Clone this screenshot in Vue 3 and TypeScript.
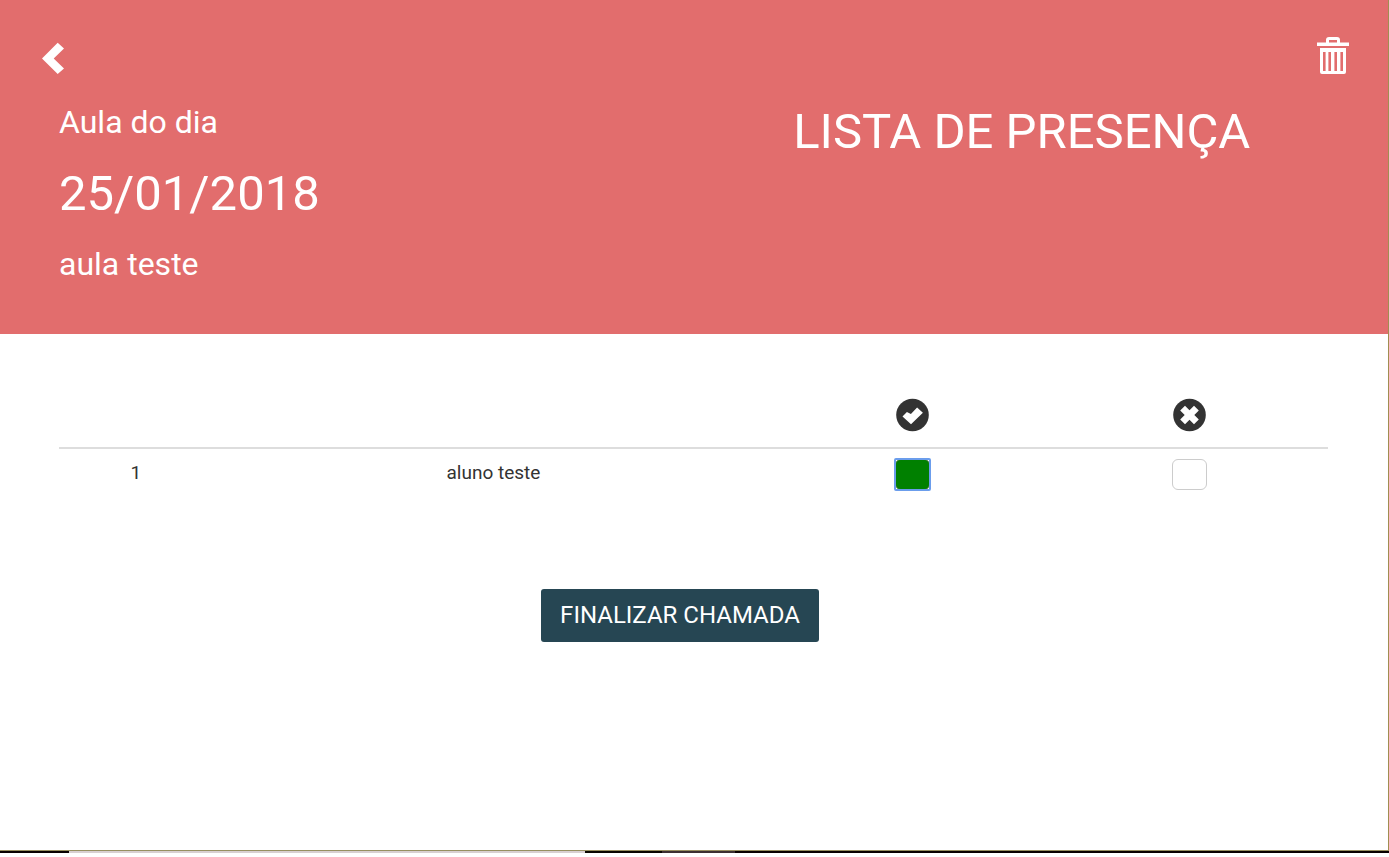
<script setup lang="ts">
import { ref } from 'vue'

type Presence = 'present' | 'absent' | null
interface Student {
  id: number
  name: string
  presence: Presence
}

const lesson = { date: '25/01/2018', title: 'aula teste' }
const students = ref<Student[]>([{ id: 1, name: 'aluno teste', presence: 'present' }])

function mark(student: Student, presence: Presence) {
  student.presence = presence
}
</script>

<template>
  <div class="page">
    <header class="banner">
      <div class="toolbar">
        <button type="button" class="icon-button" aria-label="Voltar">
          <svg width="22" height="32" viewBox="0 0 22 32" aria-hidden="true">
            <path d="M0 16.5 15.7.8 22 6.5 11.7 16.5 22 26.5l-6.3 5.5z" fill="currentColor" />
          </svg>
        </button>
        <button type="button" class="icon-button" aria-label="Excluir aula">
          <svg width="32" height="38" viewBox="0 0 32 38" aria-hidden="true">
            <path
              fill="currentColor"
              fill-rule="evenodd"
              d="M0 5.500h9V3q0-3 3-3h8q3 0 3 3v2.500h9v3.500H0zM12 3v2.500h8V3zM3 11h26v24q0 2-2 2H5q-2 0-2-2zM6 15v19h2.600V15zM11.400 15v19h2.600V15zM17.400 15v19h2.600V15zM23.400 15v19h2.600V15z"
            />
          </svg>
        </button>
      </div>
      <div class="heading">
        <div class="lesson">
          <p class="label">Aula do dia</p>
          <p class="date">{{ lesson.date }}</p>
          <p class="label">{{ lesson.title }}</p>
        </div>
        <h1>LISTA DE PRESENÇA</h1>
      </div>
    </header>

    <main>
      <table>
        <colgroup>
          <col class="col-number" />
          <col />
          <col class="col-mark" />
          <col class="col-mark" />
        </colgroup>
        <thead>
          <tr>
            <th aria-label="Número"></th>
            <th aria-label="Aluno"></th>
            <th aria-label="Presente">
              <svg width="33" height="34" viewBox="0 0 33 34" aria-hidden="true">
                <circle cx="16.5" cy="17" r="16.3" fill="#333" />
                <path d="M6.5 18.5 10.9 14l4 2.1L21.1 9.5l5.8 5.2L15 26.3z" fill="#fff" />
              </svg>
            </th>
            <th aria-label="Ausente">
              <svg width="33" height="34" viewBox="0 0 33 34" aria-hidden="true">
                <circle cx="16.5" cy="17" r="16.3" fill="#333" />
                <path
                  d="M12 7.7 16.5 12.2l4.5-4.5 4.8 4.8-4.5 4.5 4.5 4.5-4.8 4.8-4.5-4.5-4.5 4.5-4.8-4.8 4.5-4.5-4.5-4.5z"
                  fill="#fff"
                />
              </svg>
            </th>
          </tr>
        </thead>
        <tbody>
          <tr v-for="student in students" :key="student.id">
            <td>{{ student.id }}</td>
            <td>{{ student.name }}</td>
            <td>
              <button
                type="button"
                class="mark"
                :class="{ present: student.presence === 'present' }"
                :aria-pressed="student.presence === 'present'"
                :aria-label="`Presente: ${student.name}`"
                @click="mark(student, 'present')"
              ></button>
            </td>
            <td>
              <button
                type="button"
                class="mark"
                :class="{ absent: student.presence === 'absent' }"
                :aria-pressed="student.presence === 'absent'"
                :aria-label="`Ausente: ${student.name}`"
                @click="mark(student, 'absent')"
              ></button>
            </td>
          </tr>
        </tbody>
      </table>
      <button type="button" class="finish">FINALIZAR CHAMADA</button>
    </main>
    <div class="strip" aria-hidden="true"></div>
  </div>
</template>

<style>
body {
  margin: 0;
  background: #fff;
}
</style>

<style scoped>
.page {
  display: flex;
  flex-direction: column;
  min-height: calc(100vh - 4px);
  font-family: Roboto, 'Liberation Sans', sans-serif;
  color: #333;
  background: #fff;
}
.banner {
  padding: 37px 39px 46px 40px;
  color: #fff;
  background: #e26d6d;
  border-right: 1px solid #a08e50;
}
.toolbar {
  display: flex;
  justify-content: space-between;
  align-items: flex-start;
  height: 61px;
}
.icon-button {
  display: flex;
  padding: 0;
  border: 0;
  color: inherit;
  background: none;
  cursor: pointer;
}
.icon-button:first-child {
  padding: 5px 2px 0;
}
.heading {
  display: grid;
  grid-template-columns: 1fr 1fr;
}
.lesson {
  padding: 0 19px;
}
p,
h1 {
  margin: 0;
  font-weight: 400;
}
.label {
  font-size: 32px;
  line-height: 48px;
}
.date {
  margin: 13px 0 11px;
  font-size: 49px;
  line-height: 70px;
}
h1 {
  font-size: 49px;
  line-height: 68px;
  text-align: center;
}
main {
  flex: 1;
  display: flex;
  flex-direction: column;
  align-items: center;
  padding: 54px 60px 40px 59px;
  border-right: 1px solid #a08e50;
}
table {
  width: 100%;
  table-layout: fixed;
  border-collapse: collapse;
  font-size: 19px;
  line-height: 27px;
  text-align: center;
}
.col-number {
  width: 12.1%;
}
.col-mark {
  width: 21.82%;
}
th {
  height: 40px;
  padding: 7px 8px 12px;
  border-bottom: 2px solid #ddd;
}
th svg {
  display: block;
  margin: 0 auto;
}
td {
  padding: 10px 8px;
  vertical-align: top;
}
.mark {
  display: block;
  position: relative;
  box-sizing: border-box;
  width: 35px;
  height: 31px;
  margin: 0 auto;
  border: 1px solid #ccc;
  border-radius: 6px;
  background: #fff;
  cursor: pointer;
}
.present {
  border-color: #36762b;
  background: green;
}
.present::after {
  content: '';
  position: absolute;
  inset: -2px;
  border: 2px solid #6b9dec;
  border-radius: 2px;
}
.absent {
  background: red;
}
.finish {
  height: 53px;
  margin: 89px 27px 0 0;
  padding: 0 19px;
  border: 0;
  border-radius: 3px;
  font: 400 24px/53px Roboto, 'Liberation Sans', sans-serif;
  color: #fff;
  background: #264653;
  cursor: pointer;
}
.strip {
  height: 2px;
  border-top: 1px solid #979061;
  background: linear-gradient(
    to right,
    #080000 69px,
    #d8d0d2 69px 585px,
    #080500 585px 662px,
    #3b3032 662px 735px,
    #080000 735px
  );
}
</style>
